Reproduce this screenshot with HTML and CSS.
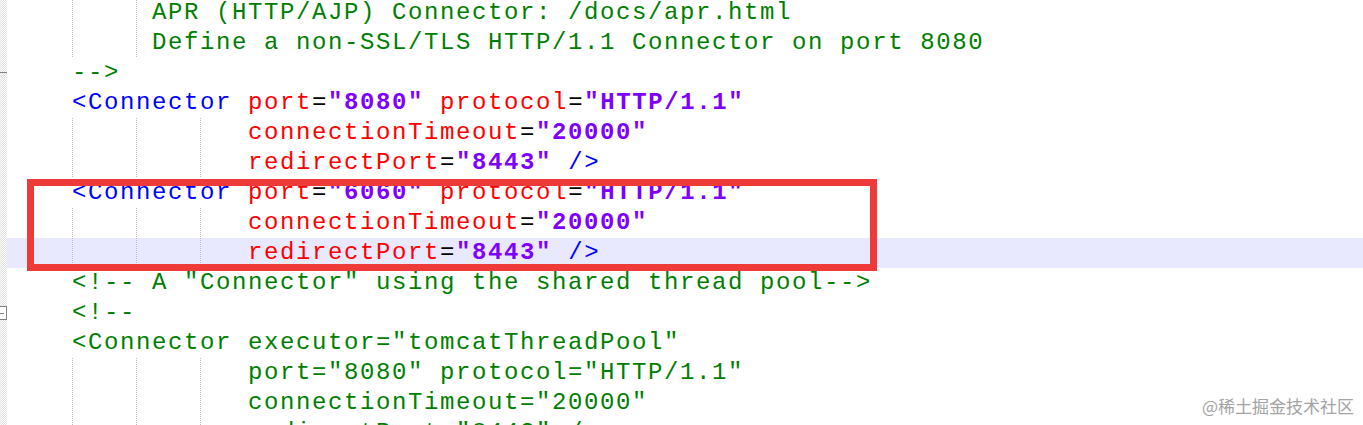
FILE: index.html
```html
<!DOCTYPE html>
<html lang="en">
	<head>
		<meta charset="UTF-8" />
		<title>server.xml</title>
		<link rel="stylesheet" href="styles.css">
	</head>
	<body>
		<div class="editor">
			<div class="line guides-2"><span class="gutter"></span><span class="code"><span class="cmt">         APR (HTTP/AJP) Connector: /docs/apr.html</span></span></div>
			<div class="line guides-2"><span class="gutter"></span><span class="code"><span class="cmt">         Define a non-SSL/TLS HTTP/1.1 Connector on port 8080</span></span></div>
			<div class="line"><span class="gutter fold-end"></span><span class="code"><span class="cmt">    --&gt;</span></span></div>
			<div class="line"><span class="gutter"></span><span class="code">    <span class="tag">&lt;Connector</span><span class="attr"> port</span>=<span class="val">"8080"</span><span class="attr"> protocol</span>=<span class="val">"HTTP/1.1"</span></span></div>
			<div class="line guides-3"><span class="gutter"></span><span class="code">               <span class="attr">connectionTimeout</span>=<span class="val">"20000"</span></span></div>
			<div class="line guides-3"><span class="gutter"></span><span class="code">               <span class="attr">redirectPort</span>=<span class="val">"8443"</span> <span class="tag">/&gt;</span></span></div>
			<div class="line"><span class="gutter"></span><span class="code">    <span class="tag">&lt;Connector</span><span class="attr"> port</span>=<span class="val">"6060"</span><span class="attr"> protocol</span>=<span class="val">"HTTP/1.1"</span></span></div>
			<div class="line guides-3"><span class="gutter"></span><span class="code">               <span class="attr">connectionTimeout</span>=<span class="val">"20000"</span></span></div>
			<div class="line guides-3 current"><span class="gutter"></span><span class="code">               <span class="attr">redirectPort</span>=<span class="val">"8443"</span> <span class="tag">/&gt;</span></span></div>
			<div class="line"><span class="gutter"></span><span class="code"><span class="cmt">    &lt;!-- A "Connector" using the shared thread pool--&gt;</span></span></div>
			<div class="line"><span class="gutter"><span class="fold-box"></span></span><span class="code"><span class="cmt">    &lt;!--</span></span></div>
			<div class="line"><span class="gutter"></span><span class="code"><span class="cmt">    &lt;Connector executor="tomcatThreadPool"</span></span></div>
			<div class="line guides-3"><span class="gutter"></span><span class="code"><span class="cmt">               port="8080" protocol="HTTP/1.1"</span></span></div>
			<div class="line guides-3"><span class="gutter"></span><span class="code"><span class="cmt">               connectionTimeout="20000"</span></span></div>
			<div class="line guides-3"><span class="gutter"></span><span class="code"><span class="cmt">               redirectPort="8443" /&gt;</span></span></div>
		</div>

		<!-- Highlight drawn over the edited connector -->
		<div class="mark"></div>

		<div class="watermark">@稀土掘金技术社区</div>
	</body>
</html>
```

FILE: styles.css
```css
body {
	margin: 0;
	padding: 0;
	height: 425px;
	background: #fff;
	overflow: hidden;
	position: relative;
}

.editor {
	margin-top: -2px;
	font-family: "Liberation Mono", "Courier New", monospace;
	font-size: 24px;
	letter-spacing: 1.6px;
	line-height: 30px;
	color: #000;
}

.line {
	display: flex;
	height: 30px;
}

.gutter {
	width: 7px;
	flex-shrink: 0;
	display: flex;
	align-items: center;
	justify-content: flex-end;
	overflow: hidden;
	background: repeating-conic-gradient(#e2e2e2 0 25%, #fbfbfb 0 50%) 0 0 / 2px 2px;
}

.code {
	flex: 1;
	padding-left: 1px;
	white-space: pre;
	background-repeat: no-repeat;
	background-size: 1px 100%;
}

.guides-2 .code {
	background-image:
		repeating-linear-gradient(#bdbdbd 0 1px, transparent 1px 2px),
		repeating-linear-gradient(#bdbdbd 0 1px, transparent 1px 2px);
	background-position: 65px 0, 129px 0;
}

.guides-3 .code {
	background-image:
		repeating-linear-gradient(#bdbdbd 0 1px, transparent 1px 2px),
		repeating-linear-gradient(#bdbdbd 0 1px, transparent 1px 2px),
		repeating-linear-gradient(#bdbdbd 0 1px, transparent 1px 2px);
	background-position: 65px 0, 129px 0, 193px 0;
}

.current .code {
	background-color: #e8e8ff;
}

/* fold markers in the margin */
.fold-end::after {
	content: "";
	width: 7px;
	height: 1px;
	margin-top: -1px;
	background: #808080;
}

.fold-box {
	flex-shrink: 0;
	width: 14px;
	height: 14px;
	box-sizing: border-box;
	border: 1px solid #808080;
	background: #fff;
	display: flex;
	align-items: center;
	justify-content: center;
}

.fold-box::after {
	content: "";
	width: 8px;
	height: 1px;
	background: #808080;
}

.cmt {
	color: #008000;
}

.tag {
	color: #0000ff;
}

.attr {
	color: #ff0000;
}

.val {
	color: #8000ff;
	font-weight: bold;
}

.mark {
	position: absolute;
	left: 27px;
	top: 179px;
	width: 850px;
	height: 92px;
	box-sizing: border-box;
	border: 7px solid #ef3a3a;
}

.watermark {
	position: absolute;
	right: 9px;
	bottom: 7px;
	font-family: "Noto Sans CJK SC", sans-serif;
	font-size: 17px;
	color: #a3a3a3;
}
```
